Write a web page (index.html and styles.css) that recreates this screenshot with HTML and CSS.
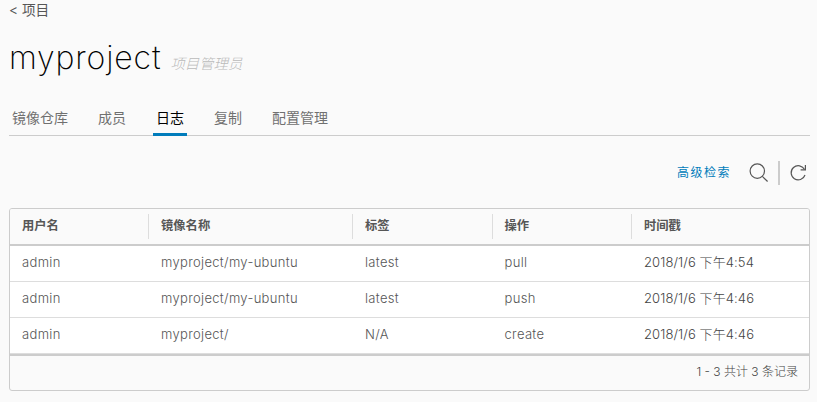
FILE: index.html
```html
<!DOCTYPE html>
<html lang="zh-CN">
<head>
<meta charset="utf-8">
<title>myproject</title>
<link rel="stylesheet" href="styles.css">
</head>
<body>
<a class="back">&lt; 项目</a>
<header class="heading"><h1 class="title">myproject</h1><em class="role">项目管理员</em></header>
<nav class="tabs">
  <a class="tab">镜像仓库</a><a class="tab">成员</a><a class="tab active">日志</a><a class="tab">复制</a><a class="tab">配置管理</a>
</nav>
<div class="toolbar">
  <a class="advanced">高级检索</a>
  <svg class="search" width="20" height="20" viewBox="0 0 20 20"><circle cx="8.3" cy="8.1" r="7.2"/><path d="M13.3 13.4 L18.6 18.5"/></svg>
  <span class="divider"></span>
  <svg class="refresh" width="17" height="18" viewBox="0 0 17 18"><path d="M14.6 5.6 A7.1 7.1 0 1 0 15 11"/><path d="M15.4 1 V5.9 H10.6"/></svg>
</div>
<section class="grid">
  <div class="row head"><span class="cell">用户名</span><span class="cell">镜像名称</span><span class="cell">标签</span><span class="cell">操作</span><span class="cell">时间戳</span></div>
  <div class="row"><span class="cell">admin</span><span class="cell">myproject/my-ubuntu</span><span class="cell">latest</span><span class="cell">pull</span><span class="cell time">2018/1/6 下午4:54</span></div>
  <div class="row"><span class="cell">admin</span><span class="cell">myproject/my-ubuntu</span><span class="cell">latest</span><span class="cell">push</span><span class="cell time">2018/1/6 下午4:46</span></div>
  <div class="row"><span class="cell">admin</span><span class="cell">myproject/</span><span class="cell">N/A</span><span class="cell">create</span><span class="cell time">2018/1/6 下午4:46</span></div>
  <footer class="foot">1 - 3 共计 3 条记录</footer>
</section>
</body>
</html>
```
FILE: styles.css
```css
* { box-sizing: border-box; }
body {
  margin: 0;
  height: 402px;
  padding: 0 7px 0 9px;
  overflow: hidden;
  background: #fafafa;
  color: #565656;
  font-family: Inter, "Noto Sans CJK SC", sans-serif;
  font-size: 13px;
}
.back { display: block; height: 20px; line-height: 20px; font-size: 13.7px; }
.heading { display: flex; align-items: baseline; height: 76px; }
.title {
  margin: 0;
  color: #000;
  font-size: 32px;
  font-weight: 200;
  line-height: 76px;
  letter-spacing: 0.85px;
}
.role { margin-left: 9px; color: #bbb; font-size: 14.4px; font-weight: 300; }
.tabs { display: flex; gap: 24px; height: 40px; border-bottom: 1px solid #ccc; }
.tab {
  height: 40px;
  padding: 0 3px;
  line-height: 44px;
  font-size: 14px;
  color: #707070;
}
.tab.active { color: #000; border-bottom: 3px solid #007cbb; }
.toolbar { display: flex; align-items: center; justify-content: flex-end; height: 72px; padding: 2px 3px 0 0; }
.advanced { color: #007cbb; font-size: 12px; letter-spacing: 1.5px; margin: -3px 18px 0 0; }
.search, .refresh { fill: none; stroke: #565656; stroke-width: 1.2; }
.refresh { margin-top: -1px; }
.divider { width: 2px; height: 24px; margin: 0 10px 0 9px; background: #ccc; }
.grid { height: 183px; border: 1px solid #ccc; border-radius: 3px; overflow: hidden; }
.row {
  display: grid;
  grid-template-columns: 139px 204px 139.5px 139.5px 1fr;
  height: 36px;
  background: #fff;
  border-bottom: 1px solid #ddd;
  font-weight: 300;
  line-height: 33px;
  letter-spacing: 0.33px;
}
.cell { padding-left: 12px; white-space: nowrap; }
.time { color: #444; letter-spacing: 0.1px; }
.head { height: 37px; background: #fafafa; border-bottom: 2px solid #ccc; font-size: 12.3px; font-weight: 700; letter-spacing: 0; }
.head .cell { height: 25px; margin-top: 5px; line-height: 24px; border-right: 1px solid #ddd; }
.head .cell:last-child { border-right: 0; }
.foot { height: 37px; border-top: 2px solid #ccc; padding-right: 11px; text-align: right; line-height: 32px; font-size: 12px; font-weight: 300; color: #444; }
```
